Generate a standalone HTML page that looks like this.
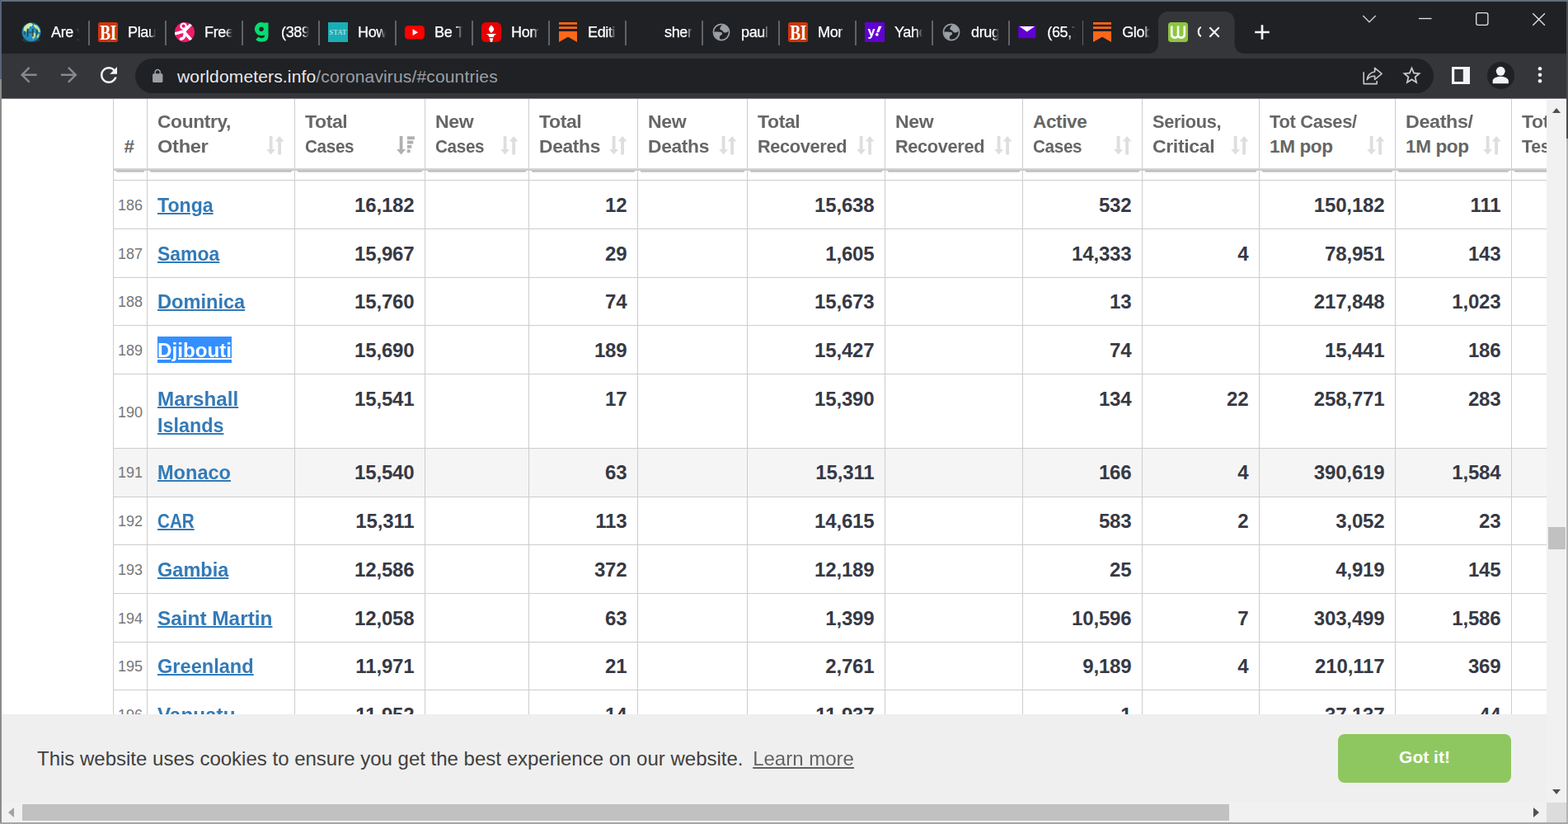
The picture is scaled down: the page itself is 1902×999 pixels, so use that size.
<!DOCTYPE html>
<html lang="en"><head><meta charset="utf-8"><title>COVID Live - Coronavirus Statistics - Worldometer</title>
<style>
*{box-sizing:border-box}
html,body{margin:0;padding:0}
body{width:1902px;height:999px;overflow:hidden;position:relative;background:#fff;font-family:"Liberation Sans",sans-serif}
.abs,.abs *{position:absolute}
#win{position:absolute;left:0;top:0;width:1902px;height:999px;overflow:hidden}
#tabstrip{position:absolute;left:2px;top:2px;width:1898px;height:63px;background:#202124}
#toolbar{position:absolute;left:2px;top:65px;width:1898px;height:54px;background:#35363a}
#omni{position:absolute;left:162px;top:6px;width:1575px;height:42px;border-radius:21px;background:#202124}
#url{position:absolute;left:213px;top:14.700px;font-size:21px;line-height:26px;color:#9aa0a6;white-space:nowrap;letter-spacing:.15px}
#url b{font-weight:400;color:#e8eaed}
.tab{position:absolute;top:23px;height:34px;width:93px}
.tab .fav{position:absolute;left:0;top:2px;width:24px;height:24px}
.tab .tt{position:absolute;left:36px;top:0;width:35px;height:34px;line-height:28px;font-size:18px;letter-spacing:-.35px;color:#fff;-webkit-text-stroke:.25px #fff;white-space:nowrap;overflow:hidden;
  -webkit-mask-image:linear-gradient(90deg,#000 0,#000 26px,transparent 34px);mask-image:linear-gradient(90deg,#000 0,#000 26px,transparent 34px)}
.sep{position:absolute;top:23px;width:1.500px;height:30px;background:#5f6368}
#page{position:absolute;left:2px;top:120px;width:1874px;height:853px;overflow:hidden;background:#fff}
.vl{position:absolute;top:0;width:1px;height:760px;background:#cdcdcd}
.hl{position:absolute;left:135px;width:1760px;height:1px;background:#cdcdcd}
.rowbg{position:absolute;left:135px;width:1760px;background:#f5f5f5}
.num{position:absolute;font-weight:700;font-size:24px;line-height:32px;height:32px;color:#363945;text-align:right;white-space:nowrap;letter-spacing:-0.15px}
.ctry{position:absolute;transform-origin:0 0;font-weight:700;font-size:23.2px;line-height:32px;height:32px;color:#337ab7;white-space:nowrap;text-decoration:underline;text-decoration-thickness:2px;text-underline-offset:.500px;letter-spacing:0px}
.idx{position:absolute;font-size:18px;line-height:24px;height:24px;color:#777;white-space:nowrap;text-align:center}
.th{position:absolute;transform-origin:0 0;font-weight:700;font-size:22.5px;line-height:30px;color:#666;white-space:nowrap;letter-spacing:-0.35px}
#thead{position:absolute;left:0;top:0;width:1874px;height:87px;background:#fff}
.thb{position:absolute;top:84px;height:3px;background:linear-gradient(#d6d6d6 0,#d6d6d6 33%,#cdcdcd 33%,#cdcdcd 100%)}
.ths{position:absolute;top:87px;height:3px;background:linear-gradient(#b2b2b2 0,#b2b2b2 33%,#e0e0e0 33%,#e0e0e0 66%,#f4f4f4 66%,#f4f4f4 100%);border-radius:0 0 4px 4px}
.sort{position:absolute;top:45px;width:22px;height:23px}
#sel{color:#fff}
#selbg{position:absolute;left:189px;top:288px;width:90px;height:32px;background:#338fff}
#cookie{position:absolute;left:2px;top:866px;width:1874px;height:107px;background:#efefef}
#cmsg{position:absolute;left:43px;top:39px;font-size:24px;line-height:30px;color:#404040;white-space:nowrap}
#cmsg u{opacity:.8;margin-left:5px;text-decoration-thickness:2px;text-underline-offset:2px}
#cbtn{position:absolute;left:1621px;top:24px;width:210px;height:59px;border-radius:8px;background:#8ec760;color:#fff;font-weight:700;font-size:21px;line-height:55.500px;text-align:center}
#vsb{position:absolute;left:1876px;top:121px;width:24px;height:852px;background:linear-gradient(90deg,#f1f1f1 0,#f1f1f1 23px,#fbfbfb 23px)}
#hsb{position:absolute;left:2px;top:973px;width:1874px;height:24px;background:#f1f1f1}
#corner{position:absolute;left:1876px;top:973px;width:24px;height:24px;background:#dcdcdc}
.thumb{position:absolute;background:#c1c1c1}
.arr{position:absolute;width:0;height:0;border:6px solid transparent}
</style></head>
<body>
<div id="win">
<div style="position:absolute;left:0;top:0;width:1902px;height:2px;background:#646c7a"></div>
<div style="position:absolute;left:0;top:0;width:2px;height:999px;background:linear-gradient(#57637a 0,#57637a 95.500px,#8b8b8b 96px,#8b8b8b 100%)"></div>
<div style="position:absolute;left:1900px;top:0;width:2px;height:999px;background:linear-gradient(#646c7a 0,#646c7a 2px,#4a4b4d 2px,#4a4b4d 167.500px,#b4b4b4 168px,#b4b4b4 100%)"></div>
<div style="position:absolute;left:0;top:997px;width:1902px;height:2px;background:#a6a6a6"></div>
<div id="tabstrip">
<svg width="117" height="51" viewBox="0 0 117 51" style="position:absolute;left:1391px;top:12px"><path d="M0 51c7 0 12-5 12-12V12C12 5 17 0 24 0h68.600c7 0 12 5 12 12v27c0 7 5 12 12 12z" fill="#35363a"/></svg>
<div class="tab" style="left:24.0px"><span class="fav"><svg width="24" height="24" viewBox="0 0 24 24" style="position:absolute;left:0;top:0;"><defs><radialGradient id="eg" cx="50%" cy="55%" r="60%"><stop offset="0" stop-color="#2fa3cf"/><stop offset=".75" stop-color="#1a86b4"/><stop offset="1" stop-color="#125a78"/></radialGradient></defs><ellipse cx="12" cy="21.500" rx="11.500" ry="2.800" fill="#33363b"/><circle cx="12" cy="11.800" r="11.600" fill="url(#eg)"/><path d="M3.500 5.500c1.800-2.600 4.600-4.300 7.600-4.800l3 1.500-1.400 2.800-2.700.2-.6 2.600-2.400 1.200-1.600 3-2.700-1.300c-.3-1.900 0-3.600.8-5.200z" fill="#d3e9a4"/><path d="M15.200 2.400l3.900 1.700 2.900 3.900.9 4.200-2.200-.8-1.300-3.200-2.900-1.500-1.900-2.500z" fill="#cfe6a0"/><path d="M13.500 13l2.600-.6 1.200 2.200-.8 3.400-2.400 3-1.300-3.400z" fill="#c3de94"/><path d="M18.600 13.500l2.900 1-.6 3.300-2 1.600z" fill="#bcd98d"/><path d="M6.600 7.600h1.900v9.800H6.600zM12.800 8h1.900v9.600h-1.900zM17.900 9.500h1.600v6.600h-1.600zM3.300 10.200h1.400v4.800H3.300z" fill="#243038" opacity=".78"/><path d="M8.500 11.200h4.300v2.300H8.500z" fill="#2b3a42" opacity=".55"/></svg></span><span class="tt">Are you</span></div>
<div class="sep" style="left:105.0px"></div>
<div class="tab" style="left:117.0px"><span class="fav"><svg width="24" height="24" viewBox="0 0 24 24" style="position:absolute;left:0;top:0;"><rect x="0" y="0" width="24" height="24" rx="2.500" fill="#c9380d"/><text x="16.400" y="20.700" text-anchor="middle" font-family="'Liberation Serif',serif" font-weight="700" font-size="26" letter-spacing="-.5" fill="#fff" transform="scale(.74,1)">BI</text></svg></span><span class="tt">Plaus</span></div>
<div class="sep" style="left:198.1px"></div>
<div class="tab" style="left:210.0px"><span class="fav"><svg width="24" height="24" viewBox="0 0 24 24" style="position:absolute;left:0;top:0;"><defs><clipPath id="pc"><circle cx="12" cy="12" r="12.100"/></clipPath></defs><circle cx="12" cy="12" r="12.100" fill="#ee1a6c"/><g clip-path="url(#pc)" fill="none" stroke="#fff" stroke-width="3.500" stroke-linecap="round" stroke-linejoin="round"><path d="M11.800 10.600L20.500 1.500M11.500 10.800L-1 14.300M12 10v3.500M12.400 13c-.3 3.500-.6 6.600-5 7.300M12.600 13.200l7.400 8.300"/><circle cx="10.600" cy="4.700" r="3.200" stroke-width="2.200" fill="#ee1a6c"/></g></svg></span><span class="tt">Free</span></div>
<div class="sep" style="left:291.1px"></div>
<div class="tab" style="left:303.0px"><span class="fav"><svg width="24" height="24" viewBox="0 0 24 24" style="position:absolute;left:0;top:0;"><g fill="none" stroke="#05dc72"><circle cx="12" cy="8.200" r="5.450" stroke-width="5.300"/><path d="M18.200 .600V16.500c0 3.600-2.600 5-6 5-2.200 0-4-.7-5.500-2" stroke-width="4.600"/></g></svg></span><span class="tt">(389)</span></div>
<div class="sep" style="left:384.1px"></div>
<div class="tab" style="left:396.0px"><span class="fav"><svg width="24" height="24" viewBox="0 0 24 24" style="position:absolute;left:0;top:0;"><rect x="0" y="0" width="24" height="24" fill="#1badb5"/><text x="12" y="15.200" text-anchor="middle" font-family="'Liberation Serif',serif" font-size="8.600" letter-spacing=".4" fill="#d4f0f2">STAT</text></svg></span><span class="tt">How</span></div>
<div class="sep" style="left:477.1px"></div>
<div class="tab" style="left:489.0px"><span class="fav"><svg width="24" height="24" viewBox="0 0 24 24" style="position:absolute;left:0;top:0;"><rect x="0" y="4" width="24" height="16.500" rx="4.500" fill="#f00"/><path d="M9.600 8.300l6.400 3.900-6.400 3.900z" fill="#fff"/></svg></span><span class="tt">Be T</span></div>
<div class="sep" style="left:570.0px"></div>
<div class="tab" style="left:582.0px"><span class="fav"><svg width="24" height="24" viewBox="0 0 24 24" style="position:absolute;left:0;top:0;"><rect x="0" y="0" width="24" height="24" rx="5.500" fill="#e80000"/><path d="M12 3.400c1.600 1.800 3.100 3.400 3.100 5.100 0 1.600-1.500 3-3.100 4.500-1.600-1.500-3.100-2.900-3.100-4.500 0-1.700 1.500-3.300 3.100-5.100z" fill="#fff"/><path d="M5.600 14.100h12.800c-2.200.8-3.200 2-3.700 3.800H9.300c-.5-1.800-1.500-3-3.700-3.800z" fill="#fff"/><path d="M9.700 19.200h4.600l-1.300 4.800h-2z" fill="#fff"/></svg></span><span class="tt">Hom</span></div>
<div class="sep" style="left:663.0px"></div>
<div class="tab" style="left:675.0px"><span class="fav"><svg width="24" height="24" viewBox="0 0 24 24" style="position:absolute;left:0;top:0;"><path d="M1 0h22v2.800H1zM1 5.300h22v2.800H1zM1 11h22v13l-11-6.200L1 24z" fill="#ff6719"/></svg></span><span class="tt">Editi</span></div>
<div class="sep" style="left:756.0px"></div>
<div class="tab" style="left:768.0px"><span class="fav"></span><span class="tt">sher</span></div>
<div class="sep" style="left:849.0px"></div>
<div class="tab" style="left:861.0px"><span class="fav"><svg width="24" height="24" viewBox="0 0 24 24" style="position:absolute;left:0;top:0;"><g fill="#9aa0a6"><circle cx="12" cy="12" r="9.600" fill="none" stroke="#9aa0a6" stroke-width="1.700"/><path d="M12.800 3.200c-1.200 1.500-2.600 3.200-2.500 4.900.1 1.300 1.600 1.300 2.700 1.900 1.100.7 1.200 2.200 2.700 2.500 1.800.4 3.600-.4 5.100-1.700.3-3.800-3.200-7.300-8-7.600z"/><path d="M3.200 11.700c3.200-.4 6.300-.3 8.500.4 1.500.5 1.700 1.900.9 3-.8 1-2.300 1.100-2.700 2.300-.3 1 .2 2.200.9 3.300-4.400-.4-7.600-4.400-7.600-9z"/></g></svg></span><span class="tt">paul</span></div>
<div class="sep" style="left:942.0px"></div>
<div class="tab" style="left:954.0px"><span class="fav"><svg width="24" height="24" viewBox="0 0 24 24" style="position:absolute;left:0;top:0;"><rect x="0" y="0" width="24" height="24" rx="2.500" fill="#c9380d"/><text x="16.400" y="20.700" text-anchor="middle" font-family="'Liberation Serif',serif" font-weight="700" font-size="26" letter-spacing="-.5" fill="#fff" transform="scale(.74,1)">BI</text></svg></span><span class="tt">Mor</span></div>
<div class="sep" style="left:1035.0px"></div>
<div class="tab" style="left:1047.0px"><span class="fav"><svg width="24" height="24" viewBox="0 0 24 24" style="position:absolute;left:0;top:0;"><rect x="0" y="0" width="24" height="24" fill="#6001d2"/><text x="3.500" y="16.500" font-family="'Liberation Sans',sans-serif" font-weight="700" font-size="16" fill="#fff">y</text><path d="M16.800 4.800h3.700l-3.300 7.400h-3z" fill="#fff"/><circle cx="14.800" cy="14.800" r="1.900" fill="#fff"/></svg></span><span class="tt">Yaho</span></div>
<div class="sep" style="left:1128.0px"></div>
<div class="tab" style="left:1140.0px"><span class="fav"><svg width="24" height="24" viewBox="0 0 24 24" style="position:absolute;left:0;top:0;"><g fill="#9aa0a6"><circle cx="12" cy="12" r="9.600" fill="none" stroke="#9aa0a6" stroke-width="1.700"/><path d="M12.800 3.200c-1.200 1.500-2.600 3.200-2.500 4.900.1 1.300 1.600 1.300 2.700 1.900 1.100.7 1.200 2.200 2.700 2.500 1.800.4 3.600-.4 5.100-1.700.3-3.800-3.200-7.300-8-7.600z"/><path d="M3.200 11.700c3.200-.4 6.300-.3 8.500.4 1.500.5 1.700 1.900.9 3-.8 1-2.300 1.100-2.700 2.300-.3 1 .2 2.200.9 3.300-4.400-.4-7.600-4.400-7.600-9z"/></g></svg></span><span class="tt">drug</span></div>
<div class="sep" style="left:1221.0px"></div>
<div class="tab" style="left:1232.3px"><span class="fav"><svg width="24" height="24" viewBox="0 0 24 24" style="position:absolute;left:0;top:0;"><rect x="1.200" y="4.300" width="21.200" height="15" rx="1" fill="#6001d2"/><path d="M2.600 5h18.400l-9.200 6.600z" fill="#fff"/></svg></span><span class="tt">(65,7</span></div>
<div class="sep" style="left:1310.6px"></div>
<div class="tab" style="left:1323.2px"><span class="fav"><svg width="24" height="24" viewBox="0 0 24 24" style="position:absolute;left:0;top:0;"><path d="M1 0h22v2.800H1zM1 5.300h22v2.800H1zM1 11h22v13l-11-6.200L1 24z" fill="#ff6719"/></svg></span><span class="tt">Glob</span></div>
<div class="tab" style="left:1415.0px"><span class="fav"><svg width="24" height="24" viewBox="0 0 24 24" style="position:absolute;left:0;top:0;"><rect x="0" y="0" width="24" height="24" rx="3.500" fill="#8cc63f"/><path d="M4.200 4.500v10.200a4 4 0 0 0 7.800 1.200a4 4 0 0 0 7.800-1.200V4.500M12 4.500v10.500" fill="none" stroke="#fff" stroke-width="2.600"/></svg></span><span class="tt" style="width:4.500px;left:35px">C</span></div>
<svg width="14" height="14" viewBox="0 0 14 14" style="position:absolute;left:1464.3px;top:30px"><path d="M1.300 1.300l11.400 11.400M12.700 1.300L1.300 12.700" stroke="#f1f3f4" stroke-width="2.100" fill="none"/></svg>
<svg width="20" height="20" viewBox="0 0 20 20" style="position:absolute;left:1518.500px;top:27.200px"><path d="M10 1.200v17.600M1.200 10h17.600" stroke="#f1f3f4" stroke-width="2.700" fill="none"/></svg>
<svg width="260" height="40" viewBox="0 0 260 40" style="position:absolute;left:1638px;top:0" fill="none" stroke="#e4e5e7" stroke-width="1.300"><path d="M13.300 17l7.700 7.700 7.700-7.700" stroke="#c8cacd" stroke-width="1.500"/><path d="M81 20.500h15.500"/><rect x="150.700" y="13.700" width="14.200" height="14.600" rx="2.200"/><path d="M219.300 14.200l14.600 14.600M233.900 14.200l-14.600 14.600"/></svg>
</div>
<div id="toolbar"><div id="omni"></div>
<svg width="29.5" height="29.5" viewBox="0 0 24 24" style="position:absolute;left:18.2px;top:11.0px" fill="#85888d"><path d="M20 11H7.830l5.590-5.590L12 4l-8 8 8 8 1.410-1.410L7.830 13H20v-2z"/></svg>
<svg width="29.5" height="29.5" viewBox="0 0 24 24" style="position:absolute;left:66.5px;top:11.0px" fill="#85888d"><path d="M12 4l-1.410 1.410L16.170 11H4v2h12.170l-5.580 5.590L12 20l8-8z"/></svg>
<svg width="30" height="30" viewBox="0 0 24 24" style="position:absolute;left:114.7px;top:11.4px" fill="#f1f3f4"><path d="M17.650 6.350C16.200 4.900 14.210 4 12 4c-4.420 0-7.990 3.580-7.990 8s3.570 8 7.990 8c3.730 0 6.840-2.550 7.730-6h-2.080c-.82 2.330-3.040 4-5.650 4-3.310 0-6-2.690-6-6s2.690-6 6-6c1.660 0 3.140.69 4.220 1.780L13 11h7V4l-2.350 2.350z"/></svg>
<svg width="18.5" height="18.5" viewBox="0 0 24 24" style="position:absolute;left:179.8px;top:17.5px" fill="#9aa0a6"><path d="M18 8h-1V6c0-2.760-2.240-5-5-5S7 3.240 7 6v2H6c-1.100 0-2 .9-2 2v10c0 1.100.9 2 2 2h12c1.100 0 2-.9 2-2V10c0-1.100-.9-2-2-2zM9 6c0-1.660 1.340-3 3-3s3 1.340 3 3v2H9V6z"/></svg>
<div id="url"><b>worldometers.info</b>/coronavirus/#countries</div>
<svg width="28" height="26" viewBox="0 0 28 26" style="position:absolute;left:1650px;top:14px" fill="none" stroke="#c4c7cb" stroke-width="1.600" stroke-linejoin="round"><path d="M2.200 8.300v14.300h16v-3.600"/><path d="M15.600 3.300l8.500 7.100-8.500 7.100v-4.200c-4.300-.1-7.300 1.300-9.300 4.300.6-5 3.600-8.500 9.300-9.600z"/></svg>
<svg width="27" height="27" viewBox="0 0 24 24" style="position:absolute;left:1696.8px;top:12.8px" fill="#c4c7cb"><path d="M22 9.240l-7.190-.62L12 2 9.190 8.630 2 9.240l5.460 4.730L5.820 21 12 17.270 18.180 21l-1.630-7.030L22 9.240zM12 15.400l-3.760 2.270 1-4.280-3.320-2.880 4.380-.38L12 6.100l1.710 4.040 4.380.38-3.320 2.880 1 4.280L12 15.400z"/></svg>
<svg width="22" height="21" viewBox="0 0 22 21" style="position:absolute;left:1759.400px;top:16px"><rect x="0" y="0" width="22" height="21" fill="#f1f3f4"/><rect x="3.200" y="3" width="10.600" height="15" fill="#35363a"/></svg>
<div style="position:absolute;left:1802.300px;top:10.200px;width:32.600px;height:32.600px;border-radius:50%;background:#202124"></div>
<svg width="28.5" height="28.5" viewBox="0 0 24 24" style="position:absolute;left:1804.3px;top:12.2px" fill="#f1f3f4"><circle cx="12" cy="7.800" r="4.600"/><path d="M12 13.300c-2.900 0-8.100 1.400-8.100 4.400v2.700h16.200v-2.700c0-3-5.200-4.400-8.100-4.400z"/></svg>
<svg width="6" height="22" viewBox="0 0 6 22" style="position:absolute;left:1863px;top:15.300px" fill="#f1f3f4"><circle cx="3" cy="3.300" r="2.300"/><circle cx="3" cy="10.750" r="2.300"/><circle cx="3" cy="18.200" r="2.300"/></svg>
</div>
<div style="position:absolute;left:2px;top:119px;width:1898px;height:1px;background:#7d7e81"></div>
<div id="page">
<div class="rowbg" style="top:423px;height:59px"></div>
<div class="hl" style="top:98px"></div>
<div class="hl" style="top:157px"></div>
<div class="hl" style="top:216px"></div>
<div class="hl" style="top:274px"></div>
<div class="hl" style="top:333px"></div>
<div class="hl" style="top:423px"></div>
<div class="hl" style="top:482px"></div>
<div class="hl" style="top:540px"></div>
<div class="hl" style="top:599px"></div>
<div class="hl" style="top:658px"></div>
<div class="hl" style="top:716px"></div>
<div class="vl" style="left:135px"></div>
<div class="vl" style="left:176px"></div>
<div class="vl" style="left:355px"></div>
<div class="vl" style="left:513px"></div>
<div class="vl" style="left:639px"></div>
<div class="vl" style="left:771px"></div>
<div class="vl" style="left:904px"></div>
<div class="vl" style="left:1071px"></div>
<div class="vl" style="left:1238px"></div>
<div class="vl" style="left:1383px"></div>
<div class="vl" style="left:1525px"></div>
<div class="vl" style="left:1690px"></div>
<div class="vl" style="left:1831px"></div>
<div id="selbg"></div>
<div class="idx" style="left:136px;top:117.3px;width:40px">186</div>
<a class="ctry" style="left:189.0px;top:112.9px;transform:scaleX(0.9966)">Tonga</a>
<div class="num" style="left:355px;width:145.5px;top:113.2px">16,182</div>
<div class="num" style="left:639px;width:119.5px;top:113.2px">12</div>
<div class="num" style="left:904px;width:154.5px;top:113.2px">15,638</div>
<div class="num" style="left:1238px;width:132.5px;top:113.2px">532</div>
<div class="num" style="left:1525px;width:152.5px;top:113.2px">150,182</div>
<div class="num" style="left:1690px;width:128.5px;top:113.2px">111</div>
<div class="idx" style="left:136px;top:176.3px;width:40px">187</div>
<a class="ctry" style="left:189.0px;top:171.9px;transform:scaleX(0.9903)">Samoa</a>
<div class="num" style="left:355px;width:145.5px;top:172.2px">15,967</div>
<div class="num" style="left:639px;width:119.5px;top:172.2px">29</div>
<div class="num" style="left:904px;width:154.5px;top:172.2px">1,605</div>
<div class="num" style="left:1238px;width:132.5px;top:172.2px">14,333</div>
<div class="num" style="left:1383px;width:129.5px;top:172.2px">4</div>
<div class="num" style="left:1525px;width:152.5px;top:172.2px">78,951</div>
<div class="num" style="left:1690px;width:128.5px;top:172.2px">143</div>
<div class="idx" style="left:136px;top:233.8px;width:40px">188</div>
<a class="ctry" style="left:189.0px;top:229.9px;transform:scaleX(1.0176)">Dominica</a>
<div class="num" style="left:355px;width:145.5px;top:230.2px">15,760</div>
<div class="num" style="left:639px;width:119.5px;top:230.2px">74</div>
<div class="num" style="left:904px;width:154.5px;top:230.2px">15,673</div>
<div class="num" style="left:1238px;width:132.5px;top:230.2px">13</div>
<div class="num" style="left:1525px;width:152.5px;top:230.2px">217,848</div>
<div class="num" style="left:1690px;width:128.5px;top:230.2px">1,023</div>
<div class="idx" style="left:136px;top:293.3px;width:40px">189</div>
<a class="ctry" id="sel" style="left:189.0px;top:288.9px;transform:scaleX(1.0431)">Djibouti</a>
<div class="num" style="left:355px;width:145.5px;top:289.2px">15,690</div>
<div class="num" style="left:639px;width:119.5px;top:289.2px">189</div>
<div class="num" style="left:904px;width:154.5px;top:289.2px">15,427</div>
<div class="num" style="left:1238px;width:132.5px;top:289.2px">74</div>
<div class="num" style="left:1525px;width:152.5px;top:289.2px">15,441</div>
<div class="num" style="left:1690px;width:128.5px;top:289.2px">186</div>
<div class="idx" style="left:136px;top:367.8px;width:40px">190</div>
<a class="ctry" style="left:189.0px;top:347.9px;transform:scaleX(1.0439)">Marshall</a>
<a class="ctry" style="left:189.0px;top:379.9px;transform:scaleX(1.0063)">Islands</a>
<div class="num" style="left:355px;width:145.5px;top:348.2px">15,541</div>
<div class="num" style="left:639px;width:119.5px;top:348.2px">17</div>
<div class="num" style="left:904px;width:154.5px;top:348.2px">15,390</div>
<div class="num" style="left:1238px;width:132.5px;top:348.2px">134</div>
<div class="num" style="left:1383px;width:129.5px;top:348.2px">22</div>
<div class="num" style="left:1525px;width:152.5px;top:348.2px">258,771</div>
<div class="num" style="left:1690px;width:128.5px;top:348.2px">283</div>
<div class="idx" style="left:136px;top:441.3px;width:40px">191</div>
<a class="ctry" style="left:189.0px;top:436.9px;transform:scaleX(1.0160)">Monaco</a>
<div class="num" style="left:355px;width:145.5px;top:437.2px">15,540</div>
<div class="num" style="left:639px;width:119.5px;top:437.2px">63</div>
<div class="num" style="left:904px;width:154.5px;top:437.2px">15,311</div>
<div class="num" style="left:1238px;width:132.5px;top:437.2px">166</div>
<div class="num" style="left:1383px;width:129.5px;top:437.2px">4</div>
<div class="num" style="left:1525px;width:152.5px;top:437.2px">390,619</div>
<div class="num" style="left:1690px;width:128.5px;top:437.2px">1,584</div>
<div class="idx" style="left:136px;top:499.8px;width:40px">192</div>
<a class="ctry" style="left:189.0px;top:495.9px;transform:scaleX(0.8898)">CAR</a>
<div class="num" style="left:355px;width:145.5px;top:496.2px">15,311</div>
<div class="num" style="left:639px;width:119.5px;top:496.2px">113</div>
<div class="num" style="left:904px;width:154.5px;top:496.2px">14,615</div>
<div class="num" style="left:1238px;width:132.5px;top:496.2px">583</div>
<div class="num" style="left:1383px;width:129.5px;top:496.2px">2</div>
<div class="num" style="left:1525px;width:152.5px;top:496.2px">3,052</div>
<div class="num" style="left:1690px;width:128.5px;top:496.2px">23</div>
<div class="idx" style="left:136px;top:559.3px;width:40px">193</div>
<a class="ctry" style="left:189.0px;top:554.9px;transform:scaleX(1.0147)">Gambia</a>
<div class="num" style="left:355px;width:145.5px;top:555.2px">12,586</div>
<div class="num" style="left:639px;width:119.5px;top:555.2px">372</div>
<div class="num" style="left:904px;width:154.5px;top:555.2px">12,189</div>
<div class="num" style="left:1238px;width:132.5px;top:555.2px">25</div>
<div class="num" style="left:1525px;width:152.5px;top:555.2px">4,919</div>
<div class="num" style="left:1690px;width:128.5px;top:555.2px">145</div>
<div class="idx" style="left:136px;top:618.3px;width:40px">194</div>
<a class="ctry" style="left:189.0px;top:613.9px;transform:scaleX(1.0505)">Saint Martin</a>
<div class="num" style="left:355px;width:145.5px;top:614.2px">12,058</div>
<div class="num" style="left:639px;width:119.5px;top:614.2px">63</div>
<div class="num" style="left:904px;width:154.5px;top:614.2px">1,399</div>
<div class="num" style="left:1238px;width:132.5px;top:614.2px">10,596</div>
<div class="num" style="left:1383px;width:129.5px;top:614.2px">7</div>
<div class="num" style="left:1525px;width:152.5px;top:614.2px">303,499</div>
<div class="num" style="left:1690px;width:128.5px;top:614.2px">1,586</div>
<div class="idx" style="left:136px;top:675.8px;width:40px">195</div>
<a class="ctry" style="left:189.0px;top:671.9px;transform:scaleX(1.0176)">Greenland</a>
<div class="num" style="left:355px;width:145.5px;top:672.2px">11,971</div>
<div class="num" style="left:639px;width:119.5px;top:672.2px">21</div>
<div class="num" style="left:904px;width:154.5px;top:672.2px">2,761</div>
<div class="num" style="left:1238px;width:132.5px;top:672.2px">9,189</div>
<div class="num" style="left:1383px;width:129.5px;top:672.2px">4</div>
<div class="num" style="left:1525px;width:152.5px;top:672.2px">210,117</div>
<div class="num" style="left:1690px;width:128.5px;top:672.2px">369</div>
<div class="idx" style="left:136px;top:735.3px;width:40px">196</div>
<a class="ctry" style="left:189.0px;top:730.9px;transform:scaleX(1.0478)">Vanuatu</a>
<div class="num" style="left:355px;width:145.5px;top:731.2px">11,952</div>
<div class="num" style="left:639px;width:119.5px;top:731.2px">14</div>
<div class="num" style="left:904px;width:154.5px;top:731.2px">11,937</div>
<div class="num" style="left:1238px;width:132.5px;top:731.2px">1</div>
<div class="num" style="left:1525px;width:152.5px;top:731.2px">37,137</div>
<div class="num" style="left:1690px;width:128.5px;top:731.2px">44</div>
<div id="thead">
<div class="vl" style="left:135px;height:89px"></div>
<div class="thb" style="left:135px;width:41px"></div>
<div class="ths" style="left:139px;width:34px"></div>
<div class="th" style="left:134.5px;top:43px;width:40px;text-align:center">#</div>
<div class="vl" style="left:176px;height:89px"></div>
<div class="thb" style="left:176px;width:179px"></div>
<div class="ths" style="left:180px;width:172px"></div>
<div class="th" style="left:189px;top:13px;transform:scaleX(1.012)">Country,</div>
<div class="th" style="left:189px;top:43px;transform:scaleX(1.055)">Other</div>
<span class="sort" style="left:321px"><svg width="22" height="23" viewBox="0 0 22 23" style="position:absolute;left:0;top:0"><g fill="#dedede"><path d="M3.7 0h3.8v16h3.5L5.6 22.5 0.2 16h3.5z"/><path d="M14.2 22.5h3.8v-16h3.5L16.1 0 10.7 6.5h3.5z"/></g></svg></span>
<div class="vl" style="left:355px;height:89px"></div>
<div class="thb" style="left:355px;width:158px"></div>
<div class="ths" style="left:359px;width:151px"></div>
<div class="th" style="left:368px;top:13px;transform:scaleX(1.021)">Total</div>
<div class="th" style="left:368px;top:43px;transform:scaleX(0.917)">Cases</div>
<span class="sort" style="left:479px"><svg width="22" height="23" viewBox="0 0 22 23" style="position:absolute;left:0;top:0"><g fill="#b0b0b0"><path d="M3.7 0h3.8v16h3.5L5.6 22.5 0.2 16h3.5z"/><rect x="12.900" y="0.300" width="9" height="3.900"/><rect x="12.900" y="5.600" width="7.400" height="3.900"/><rect x="12.900" y="10.900" width="5.400" height="3.900"/><rect x="12.900" y="16.200" width="3.700" height="4"/></g></svg></span>
<div class="vl" style="left:513px;height:89px"></div>
<div class="thb" style="left:513px;width:126px"></div>
<div class="ths" style="left:517px;width:119px"></div>
<div class="th" style="left:526px;top:13px;transform:scaleX(1.024)">New</div>
<div class="th" style="left:526px;top:43px;transform:scaleX(0.917)">Cases</div>
<span class="sort" style="left:605px"><svg width="22" height="23" viewBox="0 0 22 23" style="position:absolute;left:0;top:0"><g fill="#dedede"><path d="M3.7 0h3.8v16h3.5L5.6 22.5 0.2 16h3.5z"/><path d="M14.2 22.5h3.8v-16h3.5L16.1 0 10.7 6.5h3.5z"/></g></svg></span>
<div class="vl" style="left:639px;height:89px"></div>
<div class="thb" style="left:639px;width:132px"></div>
<div class="ths" style="left:643px;width:125px"></div>
<div class="th" style="left:652px;top:13px;transform:scaleX(1.021)">Total</div>
<div class="th" style="left:652px;top:43px;transform:scaleX(1.015)">Deaths</div>
<span class="sort" style="left:737px"><svg width="22" height="23" viewBox="0 0 22 23" style="position:absolute;left:0;top:0"><g fill="#dedede"><path d="M3.7 0h3.8v16h3.5L5.6 22.5 0.2 16h3.5z"/><path d="M14.2 22.5h3.8v-16h3.5L16.1 0 10.7 6.5h3.5z"/></g></svg></span>
<div class="vl" style="left:771px;height:89px"></div>
<div class="thb" style="left:771px;width:133px"></div>
<div class="ths" style="left:775px;width:126px"></div>
<div class="th" style="left:784px;top:13px;transform:scaleX(1.024)">New</div>
<div class="th" style="left:784px;top:43px;transform:scaleX(1.015)">Deaths</div>
<span class="sort" style="left:870px"><svg width="22" height="23" viewBox="0 0 22 23" style="position:absolute;left:0;top:0"><g fill="#dedede"><path d="M3.7 0h3.8v16h3.5L5.6 22.5 0.2 16h3.5z"/><path d="M14.2 22.5h3.8v-16h3.5L16.1 0 10.7 6.5h3.5z"/></g></svg></span>
<div class="vl" style="left:904px;height:89px"></div>
<div class="thb" style="left:904px;width:167px"></div>
<div class="ths" style="left:908px;width:160px"></div>
<div class="th" style="left:917px;top:13px;transform:scaleX(1.021)">Total</div>
<div class="th" style="left:917px;top:43px;transform:scaleX(0.966)">Recovered</div>
<span class="sort" style="left:1037px"><svg width="22" height="23" viewBox="0 0 22 23" style="position:absolute;left:0;top:0"><g fill="#dedede"><path d="M3.7 0h3.8v16h3.5L5.6 22.5 0.2 16h3.5z"/><path d="M14.2 22.5h3.8v-16h3.5L16.1 0 10.7 6.5h3.5z"/></g></svg></span>
<div class="vl" style="left:1071px;height:89px"></div>
<div class="thb" style="left:1071px;width:167px"></div>
<div class="ths" style="left:1075px;width:160px"></div>
<div class="th" style="left:1084px;top:13px;transform:scaleX(1.024)">New</div>
<div class="th" style="left:1084px;top:43px;transform:scaleX(0.966)">Recovered</div>
<span class="sort" style="left:1204px"><svg width="22" height="23" viewBox="0 0 22 23" style="position:absolute;left:0;top:0"><g fill="#dedede"><path d="M3.7 0h3.8v16h3.5L5.6 22.5 0.2 16h3.5z"/><path d="M14.2 22.5h3.8v-16h3.5L16.1 0 10.7 6.5h3.5z"/></g></svg></span>
<div class="vl" style="left:1238px;height:89px"></div>
<div class="thb" style="left:1238px;width:145px"></div>
<div class="ths" style="left:1242px;width:138px"></div>
<div class="th" style="left:1251px;top:13px;transform:scaleX(1.000)">Active</div>
<div class="th" style="left:1251px;top:43px;transform:scaleX(0.917)">Cases</div>
<span class="sort" style="left:1349px"><svg width="22" height="23" viewBox="0 0 22 23" style="position:absolute;left:0;top:0"><g fill="#dedede"><path d="M3.7 0h3.8v16h3.5L5.6 22.5 0.2 16h3.5z"/><path d="M14.2 22.5h3.8v-16h3.5L16.1 0 10.7 6.5h3.5z"/></g></svg></span>
<div class="vl" style="left:1383px;height:89px"></div>
<div class="thb" style="left:1383px;width:142px"></div>
<div class="ths" style="left:1387px;width:135px"></div>
<div class="th" style="left:1396px;top:13px;transform:scaleX(0.968)">Serious,</div>
<div class="th" style="left:1396px;top:43px;transform:scaleX(1.023)">Critical</div>
<span class="sort" style="left:1491px"><svg width="22" height="23" viewBox="0 0 22 23" style="position:absolute;left:0;top:0"><g fill="#dedede"><path d="M3.7 0h3.8v16h3.5L5.6 22.5 0.2 16h3.5z"/><path d="M14.2 22.5h3.8v-16h3.5L16.1 0 10.7 6.5h3.5z"/></g></svg></span>
<div class="vl" style="left:1525px;height:89px"></div>
<div class="thb" style="left:1525px;width:165px"></div>
<div class="ths" style="left:1529px;width:158px"></div>
<div class="th" style="left:1538px;top:13px;transform:scaleX(0.974)">Tot Cases/</div>
<div class="th" style="left:1538px;top:43px;transform:scaleX(1.000)">1M pop</div>
<span class="sort" style="left:1656px"><svg width="22" height="23" viewBox="0 0 22 23" style="position:absolute;left:0;top:0"><g fill="#dedede"><path d="M3.7 0h3.8v16h3.5L5.6 22.5 0.2 16h3.5z"/><path d="M14.2 22.5h3.8v-16h3.5L16.1 0 10.7 6.5h3.5z"/></g></svg></span>
<div class="vl" style="left:1690px;height:89px"></div>
<div class="thb" style="left:1690px;width:141px"></div>
<div class="ths" style="left:1694px;width:134px"></div>
<div class="th" style="left:1703px;top:13px;transform:scaleX(1.035)">Deaths/</div>
<div class="th" style="left:1703px;top:43px;transform:scaleX(1.000)">1M pop</div>
<span class="sort" style="left:1797px"><svg width="22" height="23" viewBox="0 0 22 23" style="position:absolute;left:0;top:0"><g fill="#dedede"><path d="M3.7 0h3.8v16h3.5L5.6 22.5 0.2 16h3.5z"/><path d="M14.2 22.5h3.8v-16h3.5L16.1 0 10.7 6.5h3.5z"/></g></svg></span>
<div class="vl" style="left:1831px;height:89px"></div>
<div class="thb" style="left:1831px;width:157px"></div>
<div class="ths" style="left:1835px;width:150px"></div>
<div class="th" style="left:1844px;top:13px;transform:scaleX(1.021)">Total</div>
<div class="th" style="left:1844px;top:43px;transform:scaleX(0.950)">Tests</div>
</div>
</div>
<div id="cookie"><div id="cmsg">This website uses cookies to ensure you get the best experience on our website. <u>Learn more</u></div><div id="cbtn">Got it!</div></div>
<div id="vsb"><div class="thumb" style="left:2px;top:518px;width:20.700px;height:27px"></div><div class="arr" style="left:6.700px;top:9.500px;border-width:0 5.500px 6px 5.500px;border-style:solid;border-color:transparent transparent #505050 transparent"></div><div class="arr" style="left:6.700px;top:836px;border-width:6px 5.500px 0 5.500px;border-style:solid;border-color:#505050 transparent transparent transparent"></div></div>
<div id="hsb"><div class="thumb" style="left:25px;top:2px;width:1464px;height:20px"></div><div class="arr" style="left:8px;top:6px;border-right:7px solid #a3a3a3;border-left-width:0"></div><div class="arr" style="left:1858.300px;top:6px;border-left:7px solid #505050;border-right-width:0"></div></div>
<div id="corner"></div>
</div>
</body></html>
